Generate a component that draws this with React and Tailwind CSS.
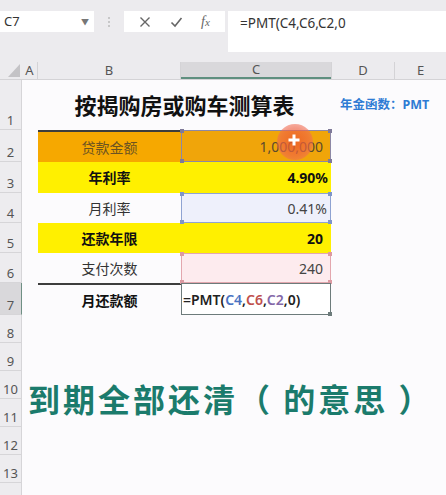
import React from "react";

const FONT = { fontFamily: '"Noto Sans", "Noto Sans CJK SC", sans-serif' };

const ROWS = [50, 32, 31, 30, 30, 30, 32, 28, 28, 28, 28, 28, 28, 28];

function Handles({ color }) {
  const cls = "absolute w-[4px] h-[4px]";
  return (
    <>
      <span className={`${cls} -left-[2px] -top-[2px]`} style={{ background: color }} />
      <span className={`${cls} -right-[2px] -top-[2px]`} style={{ background: color }} />
      <span className={`${cls} -left-[2px] -bottom-[2px]`} style={{ background: color }} />
      <span className={`${cls} -right-[2px] -bottom-[2px]`} style={{ background: color }} />
    </>
  );
}

function RowHead({ n, h, active }) {
  return (
    <div
      className={`w-[22px] shrink-0 flex items-end justify-center pb-[1px] border-r border-b border-[#d6d5d8] text-[13px] leading-[15px] text-[#555] ${
        active ? "bg-[#d9d8db] border-r-[#6f8f84]" : "bg-[#edecef]"
      }`}
      style={{ height: h }}
    >
      {n}
    </div>
  );
}

export default function App() {
  return (
    <div className="w-[446px] h-[495px] overflow-hidden bg-[#fcfbfd] relative" style={FONT}>
      {/* formula bar */}
      <div className="h-[62px] bg-[#ecebee] flex items-start pt-[11px]">
        <div className="w-[94px] h-[21px] bg-white flex items-center justify-between pl-[4px] pr-[5px]">
          <span className="text-[13px] text-[#333]">C7</span>
          <span className="text-[8px] text-[#777]">▼</span>
        </div>
        <div className="w-[30px] h-[21px] flex flex-col items-center justify-center gap-[2px]">
          <span className="w-[2px] h-[2px] bg-[#bbb] rounded-full" />
          <span className="w-[2px] h-[2px] bg-[#bbb] rounded-full" />
          <span className="w-[2px] h-[2px] bg-[#bbb] rounded-full" />
        </div>
        <div className="w-[101px] h-[21px] bg-white flex items-center justify-around px-[6px]">
          <svg width="12" height="12" viewBox="0 0 12 12">
            <path d="M1.5 1.5 L10.5 10.5 M10.5 1.5 L1.5 10.5" stroke="#666" strokeWidth="1.4" fill="none" />
          </svg>
          <svg width="13" height="12" viewBox="0 0 13 12">
            <path d="M1.5 6.5 L5 10 L11.5 2" stroke="#666" strokeWidth="1.6" fill="none" />
          </svg>
          <span className="text-[14px] italic text-[#666]" style={{ fontFamily: '"Liberation Serif", serif' }}>
            f<span className="text-[11px]">x</span>
          </span>
        </div>
        <div className="ml-[3px] flex-1 h-[41px] bg-white pl-[12px] pt-[2px] text-[13.5px] text-[#333]">
          =PMT(C4,C6,C2,0
        </div>
      </div>

      {/* column headers */}
      <div className="h-[18px] flex bg-[#ecebee] border-b border-[#d4d3d6] text-[13px] text-[#555]">
        <div className="w-[22px] shrink-0 relative">
          <svg className="absolute left-[8px] top-[2px]" width="12" height="13" viewBox="0 0 12 13">
            <path d="M12 0 L12 13 L0 13 Z" fill="#c4c3c6" />
          </svg>
        </div>
        <div className="w-[16px] shrink-0 flex items-center justify-center border-r border-[#d4d3d6]">A</div>
        <div className="w-[143px] shrink-0 flex items-center justify-center border-r border-[#d4d3d6]">B</div>
        <div className="w-[150px] shrink-0 flex items-center justify-center bg-[#d9d8db] border-b-2 border-[#5f8f7f]">C</div>
        <div className="w-[64px] shrink-0 flex items-center justify-center border-r border-l border-[#d4d3d6]">D</div>
        <div className="flex-1 flex items-center justify-center">E</div>
      </div>

      {/* row 1 */}
      <div className="flex">
        <RowHead n={1} h={ROWS[0]} />
        <div className="w-[16px] shrink-0" />
        <div className="w-[293px] shrink-0 flex items-center justify-center text-[22px] font-bold text-[#111]">
          按揭购房或购车测算表
        </div>
        <div className="flex-1 flex items-center pl-[9px] text-[12.5px] font-bold text-[#2e7bd4]">
          年金函数：PMT
        </div>
      </div>

      {/* row 2 */}
      <div className="flex">
        <RowHead n={2} h={ROWS[1]} />
        <div className="w-[16px] shrink-0" />
        <div className="w-[143px] shrink-0 bg-[#f6a800] border-t-2 border-[#3d3d3d] flex items-center justify-center text-[14px] text-[#6b5322]">
          贷款金额
        </div>
        <div className="w-[150px] shrink-0 relative bg-[#f0a50a] border border-[#8d88a5] flex items-center justify-end pr-[7px] text-[14px] text-[#5b4a2e]">
          <Handles color="#7f7a99" />
          1,000,000
        </div>
      </div>

      {/* row 3 */}
      <div className="flex">
        <RowHead n={3} h={ROWS[2]} />
        <div className="w-[16px] shrink-0" />
        <div className="w-[143px] shrink-0 bg-[#fff000] flex items-center justify-center text-[14px] font-bold text-[#111]">
          年利率
        </div>
        <div className="w-[150px] shrink-0 bg-[#fff000] flex items-center justify-end pr-[3px] text-[14px] font-bold text-[#111]">
          4.90%
        </div>
      </div>

      {/* row 4 */}
      <div className="flex">
        <RowHead n={4} h={ROWS[3]} />
        <div className="w-[16px] shrink-0" />
        <div className="w-[143px] shrink-0 flex items-center justify-center text-[14px] text-[#333]">月利率</div>
        <div className="w-[150px] shrink-0 relative bg-[#eef0fb] border border-[#8fa3d2] flex items-center justify-end pr-[3px] text-[14px] text-[#444]">
          <Handles color="#7f95c8" />
          0.41%
        </div>
      </div>

      {/* row 5 */}
      <div className="flex">
        <RowHead n={5} h={ROWS[4]} />
        <div className="w-[16px] shrink-0" />
        <div className="w-[143px] shrink-0 bg-[#fff000] flex items-center justify-center text-[14px] font-bold text-[#111]">
          还款年限
        </div>
        <div className="w-[150px] shrink-0 bg-[#fff000] flex items-center justify-end pr-[8px] text-[14px] font-bold text-[#111]">
          20
        </div>
      </div>

      {/* row 6 */}
      <div className="flex">
        <RowHead n={6} h={ROWS[5]} />
        <div className="w-[16px] shrink-0" />
        <div className="w-[143px] shrink-0 flex items-center justify-center text-[14px] text-[#333]">支付次数</div>
        <div className="w-[150px] shrink-0 relative bg-[#fdebee] border border-[#e3a7ae] flex items-center justify-end pr-[7px] text-[14px] text-[#444]">
          <Handles color="#dc9aa2" />
          240
        </div>
      </div>

      {/* row 7 */}
      <div className="flex">
        <RowHead n={7} h={ROWS[6]} active />
        <div className="w-[16px] shrink-0" />
        <div className="w-[143px] shrink-0 border-t-2 border-[#3d3d3d] flex items-center justify-center text-[14px] font-bold text-[#111]">
          月还款额
        </div>
        <div className="w-[150px] shrink-0 relative bg-white border border-[#6d7b7b] flex items-center pl-[1px] text-[14px] font-semibold text-[#222]">
          <span className="absolute -right-[2px] -bottom-[2px] w-[4px] h-[4px] bg-[#6d7b7b]" />
          =PMT(<span className="text-[#4a73c2]">C4</span>,<span className="text-[#c0504d]">C6</span>,
          <span className="text-[#8468a8]">C2</span>,0)
        </div>
      </div>

      {/* rows 8+ */}
      {ROWS.slice(7).map((h, i) => (
        <div className="flex" key={i}>
          <RowHead n={i + 8 <= 13 ? i + 8 : ""} h={h} />
        </div>
      ))}

      {/* pointer highlight */}
      <div
        className="absolute left-[277px] top-[124px] w-[36px] h-[36px] rounded-full flex items-center justify-center"
        style={{ background: "radial-gradient(circle, rgba(238,90,40,0.8) 0%, rgba(240,100,70,0.65) 55%, rgba(245,130,120,0.4) 100%)" }}
      >
        <svg width="12" height="12" viewBox="0 0 12 12" className="-mt-[4px] -ml-[3px]">
          <path d="M6 0.5 V11.5 M0.5 6 H11.5" stroke="white" strokeWidth="3" />
        </svg>
      </div>

      {/* annotation */}
      <div
        className="absolute left-[28px] top-[382px] text-[32px] leading-[32px] font-bold text-[#1b7b6c] whitespace-nowrap tracking-[3px]"
        style={{ fontFamily: '"Noto Sans CJK SC", sans-serif' }}
      >
        到期全部还清（ 的意思 ）
      </div>
    </div>
  );
}
